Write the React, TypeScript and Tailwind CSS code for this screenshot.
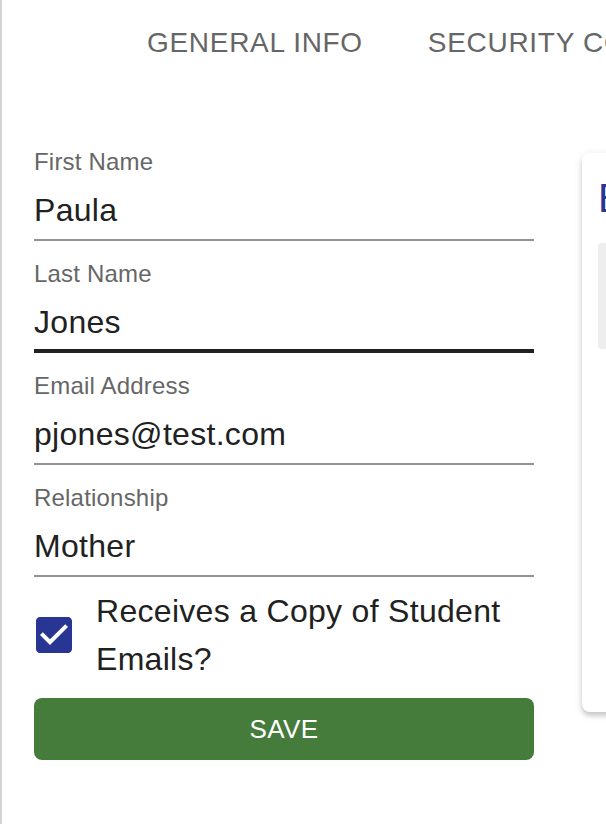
import React from "react";

const fields = [
  { label: "First Name", value: "Paula" },
  { label: "Last Name", value: "Jones", focused: true },
  { label: "Email Address", value: "pjones@test.com" },
  { label: "Relationship", value: "Mother" },
];

function Field({ label, value, focused }: { label: string; value: string; focused?: boolean }) {
  return (
    <div className="flex flex-col pb-[21px]">
      <label className="text-[24px] leading-[24px] text-[#666666] tracking-[0.2px]">{label}</label>
      <div
        className={
          focused
            ? "mt-[18px] pb-[9px] border-b-4 border-[#212121]"
            : "mt-[18px] pb-[11px] border-b-2 border-[#949494]"
        }
      >
        <input
          readOnly
          value={value}
          className="w-full bg-transparent outline-none text-[32px] leading-[36px] h-[36px] text-[#212121] tracking-[0.3px]"
        />
      </div>
    </div>
  );
}

export default function App() {
  return (
    <div
      className="relative w-[606px] min-h-[824px] overflow-hidden bg-white border-l-2 border-[#d4d4d4]"
      style={{ fontFamily: '"Liberation Sans", Arial, sans-serif' }}
    >
      {/* Tabs */}
      <div className="flex h-[96px] pt-[29px] pl-[145px] gap-[65px] whitespace-nowrap">
        <span className="text-[28px] leading-[28px] tracking-[0.7px] text-[#666666] uppercase">General Info</span>
        <span className="text-[28px] leading-[28px] tracking-[0.7px] text-[#666666] uppercase">Security Contacts</span>
      </div>

      <div className="flex items-start pl-[32px] gap-[48px]">
        {/* Form */}
        <div className="w-[500px] shrink-0 pt-[54px] flex flex-col">
          {fields.map((f) => (
            <Field key={f.label} {...f} />
          ))}

          <div className="flex items-center -mt-[11px]">
            <span className="w-[48px] h-[48px] shrink-0 -ml-[4px]">
              <svg viewBox="0 0 24 24" width="48" height="48" fill="#283593">
                <path d="M19 3H5c-1.11 0-2 .9-2 2v14c0 1.1.89 2 2 2h14c1.11 0 2-.9 2-2V5c0-1.1-.89-2-2-2zm-9 14l-5-5 1.41-1.41L10 14.17l7.59-7.59L19 8l-9 9z" />
              </svg>
            </span>
            <span className="ml-[18px] text-[32px] leading-[48px] text-[#212121] tracking-[0.3px]">
              Receives a Copy of Student Emails?
            </span>
          </div>

          <button className="mt-[15px] h-[62px] w-full rounded-[8px] bg-[#457b3b] text-white text-[26px] tracking-[0.4px] uppercase">
            Save
          </button>
        </div>

        {/* Side card */}
        <div className="mt-[57px] w-[320px] h-[559px] shrink-0 rounded-[8px] bg-white pt-[21px] pl-[16px] shadow-[0_4px_4px_rgba(0,0,0,0.14),0_2px_10px_rgba(0,0,0,0.12)]">
          <h2 className="text-[40px] leading-[48px] text-[#283593] whitespace-nowrap">Emergency Contacts</h2>
          <div className="mt-[21px] h-[106px] bg-[#eeeeee] rounded-[4px]" />
        </div>
      </div>
    </div>
  );
}
